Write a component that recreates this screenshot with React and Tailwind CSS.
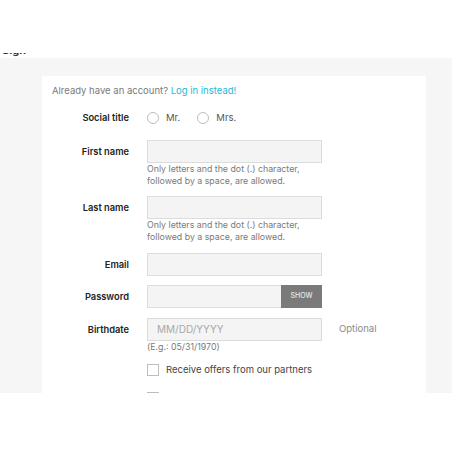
import React from 'react'

const FONT = { fontFamily: 'Inter, "Noto Sans", sans-serif' }

function Label({ children }) {
  return (
    <div className="w-[87px] shrink-0 text-right text-[9.3px] font-semibold text-[#232323]">
      {children}
    </div>
  )
}

function Field({ label, help, children, className = '' }) {
  return (
    <div className={`flex ${className}`}>
      <div className="flex h-[23px] items-center">
        <Label>{label}</Label>
      </div>
      <div className="ml-[18px] w-[175px]">
        {children}
        {help && (
          <div className="text-[8.8px] leading-[12px] text-[#7a7a7a]">{help}</div>
        )}
      </div>
    </div>
  )
}

function TextInput({ placeholder }) {
  return (
    <div className="flex h-[23px] w-[175px] items-center border border-[#dcdcdc] bg-[#f4f4f4] pl-[9px] text-[10px] text-[#a8a8a8]">
      {placeholder}
    </div>
  )
}

function Radio({ label }) {
  return (
    <div className="flex items-center gap-[7px]">
      <span className="h-[12px] w-[12px] rounded-full border border-[#bdbdbd] bg-white" />
      <span className="text-[9.5px] text-[#555]">{label}</span>
    </div>
  )
}

function Checkbox({ label }) {
  return (
    <div className="flex items-center gap-[7px]">
      <span className="h-[12px] w-[12px] border border-[#bdbdbd] bg-white" />
      <span className="text-[9.5px] text-[#444]">{label}</span>
    </div>
  )
}

const NAME_HELP = (
  <>
    Only letters and the dot (.) character,
    <br />
    followed by a space, are allowed.
  </>
)

export default function App() {
  return (
    <div className="h-[452px] w-[452px] overflow-hidden bg-white" style={FONT}>
      {/* page heading, scrolled mostly out of view */}
      <div className="h-[58px] pt-[53px]">
        <div className="ml-[2px] h-[4px] overflow-hidden">
          <div className="-mt-[9px] text-[11px] font-bold leading-[12px] text-[#333]">Sign</div>
        </div>
      </div>

      <div className="h-[335px] overflow-hidden bg-[#f6f6f6] pt-[18px]">
        <div className="ml-[42px] h-[400px] w-[384px] bg-white px-[10px] pt-[8px]">
          <p className="h-[14px] text-[9.5px] leading-[14px] text-[#7a7a7a]">
            Already have an account?{' '}
            <span className="text-[#24b9d7]">Log in instead!</span>
          </p>

          <div className="-ml-[10px] mt-[13px] flex h-[14px] items-center">
            <Label>Social title</Label>
            <div className="ml-[18px] flex items-center gap-[17px]">
              <Radio label="Mr." />
              <Radio label="Mrs." />
            </div>
          </div>

          <div className="-ml-[10px]">
            <Field label="First name" help={NAME_HELP} className="mt-[15px]">
              <TextInput />
            </Field>
            <Field label="Last name" help={NAME_HELP} className="mt-[9px]">
              <TextInput />
            </Field>
            <Field label="Email" className="mt-[10px]">
              <TextInput />
            </Field>
            <Field label="Password" className="mt-[9px]">
              <div className="flex h-[23px] w-[175px]">
                <div className="flex-1 border border-r-0 border-[#dcdcdc] bg-[#f4f4f4]" />
                <button className="w-[41px] bg-[#7a7a7a] text-[7px] font-medium text-[#e8e8e8]">
                  SHOW
                </button>
              </div>
            </Field>
            <div className="mt-[10px] flex">
              <Field label="Birthdate" help="(E.g.: 05/31/1970)">
                <TextInput placeholder="MM/DD/YYYY" />
              </Field>
              <div className="ml-[17px] flex h-[23px] items-center text-[9.5px] text-[#8a8a8a]">
                Optional
              </div>
            </div>

            <div className="ml-[105px] mt-[10px] flex flex-col gap-[14px]">
              <Checkbox label="Receive offers from our partners" />
              <Checkbox label="I agree to the terms and conditions" />
            </div>
          </div>
        </div>
      </div>
    </div>
  )
}
